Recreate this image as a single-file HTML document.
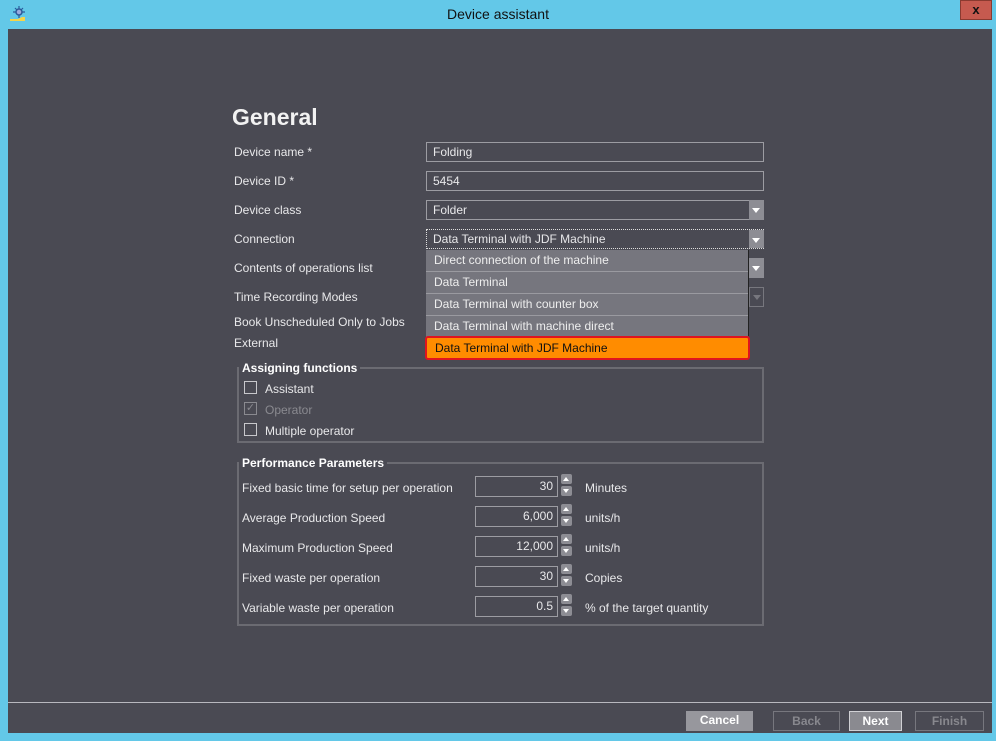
<!DOCTYPE html>
<html><head><meta charset="utf-8"><style>
*{box-sizing:border-box;margin:0;padding:0}
body{width:996px;height:741px;background:#63c8e8;font-family:"Liberation Sans",Arial,sans-serif;font-size:12px;color:#e8e8ea;position:relative;overflow:hidden}
.a{position:absolute}
.main{left:8px;top:29px;width:984px;height:704px;background:#4a4a53}
.lbl{position:absolute;white-space:nowrap}
.inp{position:absolute;border:1px solid #9c9ca2;background:#4a4a53;padding-left:6px;line-height:18px;height:20px}
.arr{position:absolute;width:15px;background:#8d8d94}
.arr:after{content:"";position:absolute;left:3px;top:8px;border-left:4.5px solid transparent;border-right:4.5px solid transparent;border-top:5px solid #fff}
.item{position:absolute;left:426px;width:322px;height:22px;background:#76767e;border-bottom:1px solid #9a9aa0;padding-left:8px;line-height:21px;color:#eee}
.box{position:absolute;border:2px solid #6b6b72}
.leg{position:absolute;background:#4a4a53;font-weight:bold;padding:0 3px;color:#fff}
.cb{position:absolute;width:13px;height:13px;border:1px solid #c8c8cc}
.sp{position:absolute;left:475px;width:83px;height:21px;border:1px solid #9c9ca2;text-align:right;padding-right:4px;line-height:19px}
.sb{position:absolute;left:561px;width:11px;height:10px;background:#8d8d94;border-radius:2px}
.sb.u:after{content:"";position:absolute;left:2px;top:3px;border-left:3.5px solid transparent;border-right:3.5px solid transparent;border-bottom:4px solid #fff}
.sb.d:after{content:"";position:absolute;left:2px;top:3px;border-left:3.5px solid transparent;border-right:3.5px solid transparent;border-top:4px solid #fff}
.btn{position:absolute;top:711px;height:20px;text-align:center;font-weight:bold;line-height:19px;font-size:12px}
</style></head><body>
<div class="a" style="left:8px;top:6px;width:20px;height:16px">
<svg width="20" height="16"><circle cx="11" cy="6" r="3" fill="#9ad" stroke="#2b5a9a" stroke-width="1.5"/><path d="M11 0v3M11 9v3M5 6h3M14 6h3M7 2l2 2M15 2l-2 2" stroke="#2b5a9a" stroke-width="1.2"/><path d="M2 13h8l4 -2h3v4H2z" fill="#f5d54a"/></svg></div>
<div class="lbl" style="left:0;width:996px;top:6px;text-align:center;font-size:14px;color:#111">Device assistant</div>
<div class="a" style="left:960px;top:0;width:32px;height:20px;background:#c65a4f;border:1px solid #8a3a30;text-align:center;font-weight:bold;color:#111;font-size:13px;line-height:17px">x</div>
<div class="a main"></div>
<div class="lbl" style="left:232px;top:104px;font-size:23px;font-weight:bold;color:#f2f2f2">General</div>
<div class="lbl" style="left:234px;top:145px">Device name *</div>
<div class="lbl" style="left:234px;top:174px">Device ID *</div>
<div class="lbl" style="left:234px;top:203px">Device class</div>
<div class="lbl" style="left:234px;top:232px">Connection</div>
<div class="lbl" style="left:234px;top:261px">Contents of operations list</div>
<div class="lbl" style="left:234px;top:290px">Time Recording Modes</div>
<div class="lbl" style="left:234px;top:315px">Book Unscheduled Only to Jobs</div>
<div class="lbl" style="left:234px;top:336px">External</div>
<div class="inp" style="left:426px;top:142px;width:338px">Folding</div>
<div class="inp" style="left:426px;top:171px;width:338px">5454</div>
<div class="inp" style="left:426px;top:200px;width:338px">Folder</div>
<div class="arr" style="left:749px;top:200px;height:20px"></div>
<div class="inp" style="left:426px;top:229px;width:338px;border:1px dotted #ddd">Data Terminal with JDF Machine</div>
<div class="arr" style="left:749px;top:230px;height:18px"></div>
<div class="arr" style="left:749px;top:258px;height:20px"></div>
<div class="a" style="left:749px;top:287px;width:15px;height:20px;border:1px solid #77777e"></div>
<div class="a" style="left:753px;top:295px;border-left:4px solid transparent;border-right:4px solid transparent;border-top:5px solid #77777e"></div>
<div class="item" style="top:250px">Direct connection of the machine</div>
<div class="item" style="top:272px">Data Terminal</div>
<div class="item" style="top:294px">Data Terminal with counter box</div>
<div class="item" style="top:316px">Data Terminal with machine direct</div>
<div class="item" style="top:336px;left:425px;width:325px;height:24px;background:#ff8c00;border:2px solid #e0141e;border-radius:3px;color:#111;line-height:20px">Data Terminal with JDF Machine</div>
<div class="a" style="left:748px;top:250px;width:1px;height:86px;background:#222"></div>
<div class="box" style="left:237px;top:367px;width:527px;height:76px"></div>
<div class="leg" style="left:239px;top:361px">Assigning functions</div>
<div class="cb" style="left:244px;top:381px"></div><div class="lbl" style="left:265px;top:382px">Assistant</div>
<div class="cb" style="left:244px;top:402px;border-color:#8a8a90;color:#8a8a90;font-size:11px;line-height:11px;text-align:center">✓</div><div class="lbl" style="left:265px;top:403px;color:#8a8a90">Operator</div>
<div class="cb" style="left:244px;top:423px"></div><div class="lbl" style="left:265px;top:424px">Multiple operator</div>
<div class="box" style="left:237px;top:462px;width:527px;height:164px"></div>
<div class="leg" style="left:239px;top:456px">Performance Parameters</div>
<div class="lbl" style="left:242px;top:481px">Fixed basic time for setup per operation</div>
<div class="lbl" style="left:242px;top:511px">Average Production Speed</div>
<div class="lbl" style="left:242px;top:541px">Maximum Production Speed</div>
<div class="lbl" style="left:242px;top:571px">Fixed waste per operation</div>
<div class="lbl" style="left:242px;top:601px">Variable waste per operation</div>
<div class="sp" style="top:476px">30</div><div class="sp" style="top:506px">6,000</div><div class="sp" style="top:536px">12,000</div><div class="sp" style="top:566px">30</div><div class="sp" style="top:596px">0.5</div>
<div class="sb u" style="top:474px"></div><div class="sb d" style="top:486px"></div>
<div class="sb u" style="top:504px"></div><div class="sb d" style="top:516px"></div>
<div class="sb u" style="top:534px"></div><div class="sb d" style="top:546px"></div>
<div class="sb u" style="top:564px"></div><div class="sb d" style="top:576px"></div>
<div class="sb u" style="top:594px"></div><div class="sb d" style="top:606px"></div>
<div class="lbl" style="left:585px;top:481px">Minutes</div>
<div class="lbl" style="left:585px;top:511px">units/h</div>
<div class="lbl" style="left:585px;top:541px">units/h</div>
<div class="lbl" style="left:585px;top:571px">Copies</div>
<div class="lbl" style="left:585px;top:601px">% of the target quantity</div>
<div class="a" style="left:8px;top:702px;width:984px;height:1px;background:#b8b8be"></div>
<div class="btn" style="left:686px;width:67px;background:#97979d;color:#fff">Cancel</div>
<div class="btn" style="left:773px;width:67px;border:1px solid #77777e;color:#88888e">Back</div>
<div class="btn" style="left:849px;width:53px;background:#8a8a90;border:1px solid #d0d0d4;color:#fff">Next</div>
<div class="btn" style="left:915px;width:69px;border:1px solid #77777e;color:#88888e">Finish</div>
</body></html>
